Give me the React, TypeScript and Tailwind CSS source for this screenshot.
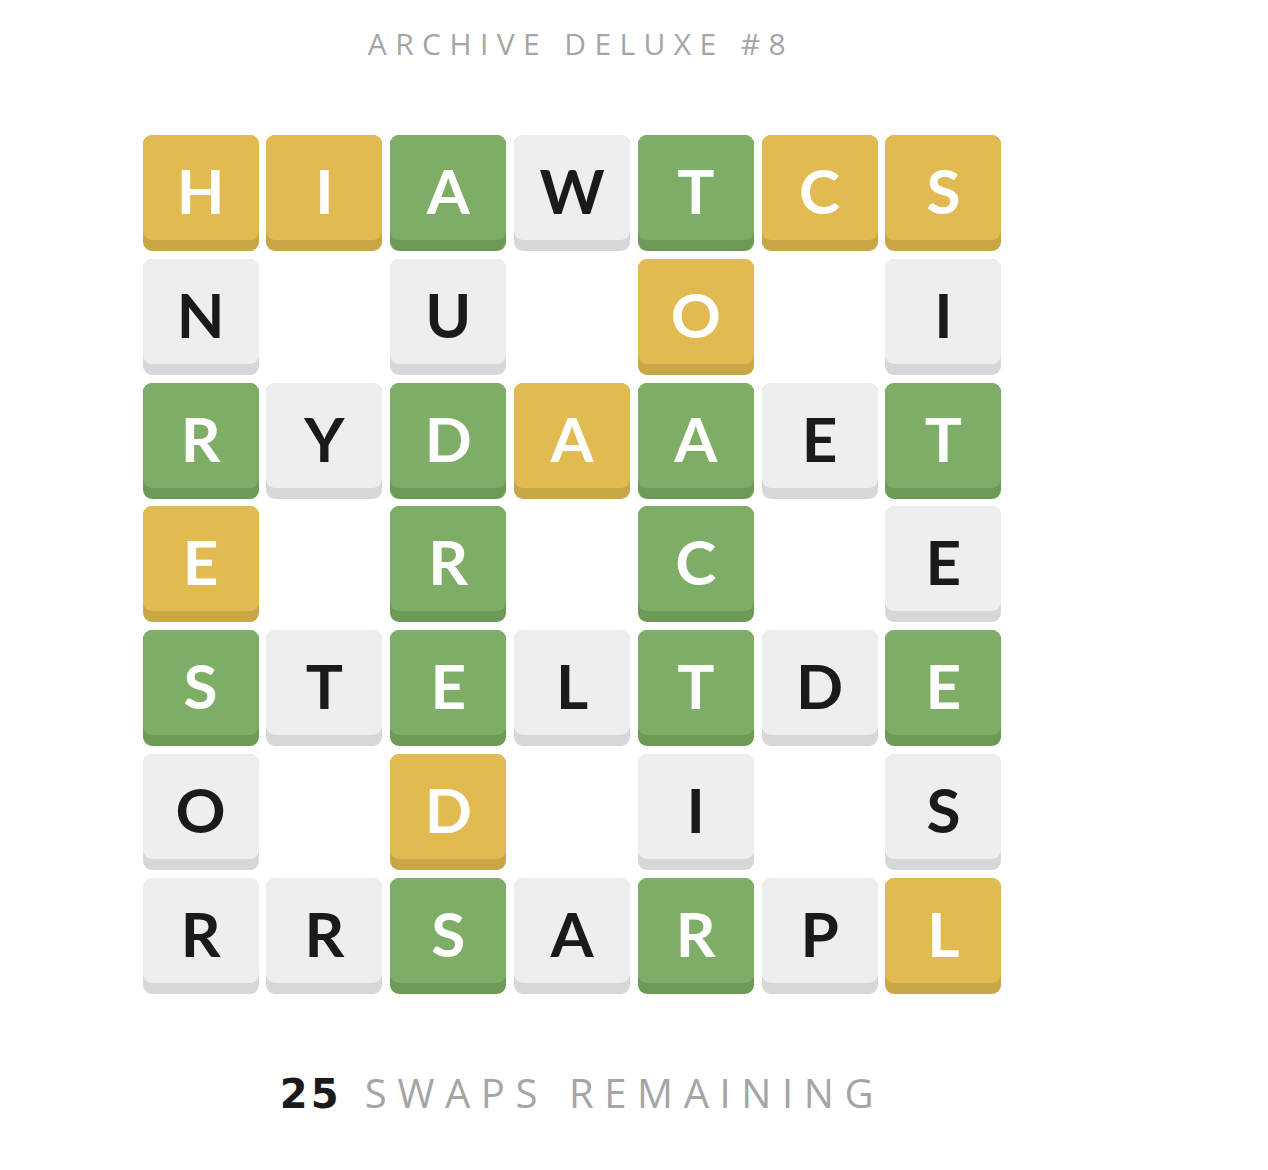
import React from "react";

type Cell = [string, "g" | "y" | "w"] | null;

const rows: Cell[][] = [
  [["H", "y"], ["I", "y"], ["A", "g"], ["W", "w"], ["T", "g"], ["C", "y"], ["S", "y"]],
  [["N", "w"], null, ["U", "w"], null, ["O", "y"], null, ["I", "w"]],
  [["R", "g"], ["Y", "w"], ["D", "g"], ["A", "y"], ["A", "g"], ["E", "w"], ["T", "g"]],
  [["E", "y"], null, ["R", "g"], null, ["C", "g"], null, ["E", "w"]],
  [["S", "g"], ["T", "w"], ["E", "g"], ["L", "w"], ["T", "g"], ["D", "w"], ["E", "g"]],
  [["O", "w"], null, ["D", "y"], null, ["I", "w"], null, ["S", "w"]],
  [["R", "w"], ["R", "w"], ["S", "g"], ["A", "w"], ["R", "g"], ["P", "w"], ["L", "y"]],
];

const styles = {
  g: { base: "bg-[#6d9a57]", face: "bg-[#7ead66] text-white" },
  y: { base: "bg-[#c9a746]", face: "bg-[#e1bb52] text-white" },
  w: { base: "bg-[#d6d7d9]", face: "bg-[#edeef0] text-[#1a1a1a]" },
};

function Tile({ cell }: { cell: Cell }) {
  if (!cell) return <div className="h-[116px] w-[116px]" />;
  const [letter, kind] = cell;
  const s = styles[kind];
  return (
    <div className={`h-[116px] w-[116px] rounded-[9px] pb-[11px] ${s.base}`}>
      <div
        className={`flex h-full w-full items-center justify-center rounded-[9px] pt-[6px] text-[62px] font-bold ${s.face}`}
      >
        {letter}
      </div>
    </div>
  );
}

export default function App() {
  return (
    <div className="min-h-screen bg-white" style={{ fontFamily: "Lato, 'Noto Sans', sans-serif" }}>
      <div className="ml-[142px] flex w-[860px] flex-col items-center">
        <h1 className="mt-[22px] pl-[18px] font-['Open_Sans',sans-serif] text-[30px] font-normal leading-[44px] tracking-[0.28em] text-[#a5a5a5]">
          ARCHIVE DELUXE #8
        </h1>
        <div className="mt-[69px] grid grid-cols-7 gap-x-[7.8px] gap-y-[7.8px]">
          {rows.flat().map((c, i) => (
            <Tile key={i} cell={c} />
          ))}
        </div>
        <div className="mt-[73px] flex items-baseline gap-[23px] pl-[20px] font-['Open_Sans',sans-serif] text-[40px] leading-[52px]">
          <span className="font-['DejaVu_Sans',sans-serif] font-bold tracking-[0.08em] text-[#1a1a1a]">25</span>
          <span className="tracking-[0.265em] text-[#a5a5a5]">SWAPS REMAINING</span>
        </div>
      </div>
    </div>
  );
}
